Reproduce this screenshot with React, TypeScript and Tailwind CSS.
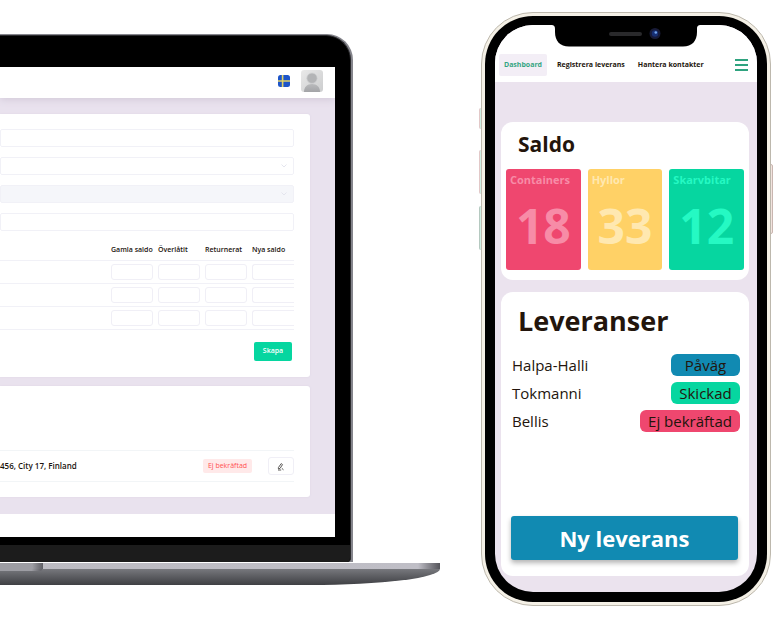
import React from "react";

const columns = ["Gamla saldo", "Överlåtit", "Returnerat", "Nya saldo"];
const products = ["Containers", "Hyllor", "Skarvbitar"];

const balances = [
  { label: "Containers", value: 18, style: "bg-[#ef476f] text-[#f78ca7]" },
  { label: "Hyllor", value: 33, style: "bg-[#ffd166] text-[#ffe8b0]" },
  { label: "Skarvbitar", value: 12, style: "bg-[#06d6a0] text-[#25f9c3]" },
];

const deliveries = [
  { name: "Halpa-Halli", status: "Påväg", style: "w-[69px] bg-[#118ab2]" },
  { name: "Tokmanni", status: "Skickad", style: "w-[69px] bg-[#06d6a0]" },
  { name: "Bellis", status: "Ej bekräftad", style: "w-[100px] bg-[#ef476f]" },
];

function SwedishFlag() {
  return (
    <svg viewBox="0 0 12 12" className="size-3" aria-hidden="true">
      <rect width="12" height="12" rx="2.5" fill="#1d55c9" />
      <path d="M4.6 0v12M0 6h12" stroke="#e3d267" strokeWidth="1.6" />
    </svg>
  );
}

function Avatar() {
  return (
    <svg viewBox="0 0 22 22" className="size-[22px]" aria-hidden="true">
      <defs>
        <linearGradient id="avatarBg" x1="0" y1="0" x2="1" y2="1">
          <stop offset="0" stopColor="#e9e9e9" />
          <stop offset="1" stopColor="#cccdce" />
        </linearGradient>
        <linearGradient id="avatarBody" x1="0" y1="0" x2="0" y2="1">
          <stop offset="0" stopColor="#b9babc" />
          <stop offset="1" stopColor="#a3a4a7" />
        </linearGradient>
      </defs>
      <rect width="22" height="22" rx="3" fill="url(#avatarBg)" />
      <path d="M3 22c0-5 3-8 8-8s8 3 8 8z" fill="url(#avatarBody)" />
      <circle cx="11" cy="8.2" r="5.2" fill="#b3b4b6" stroke="#d0d1d2" strokeWidth="0.7" />
    </svg>
  );
}

function Field({ label }: { label: string }) {
  return (
    <input
      type="text"
      aria-label={label}
      className="block h-[18px] w-full rounded-[2px] border border-[#f1f1f7] bg-white px-2 text-[8px] outline-none"
    />
  );
}

function SelectField({ label, style }: { label: string; style: string }) {
  return (
    <div className="relative">
      <select
        aria-label={label}
        className={"block h-[18px] w-full appearance-none rounded-[2px] border border-[#f1f1f7] px-2 text-[8px] outline-none " + style}
      >
        <option value=""></option>
      </select>
      <svg viewBox="0 0 6 4" className="pointer-events-none absolute top-[7px] right-[7px] h-1 w-[6px]" aria-hidden="true">
        <path d="M0.5 0.5 3 3 5.5 0.5" fill="none" stroke="#e4e5ee" />
      </svg>
    </div>
  );
}

function LaptopScreen() {
  return (
    <div className="overflow-hidden bg-[#e9e2ee]">
      <header className="flex h-[31px] items-center justify-end gap-[11px] bg-white pr-3 pb-1 shadow-[0_1px_8px_#cfc6d6]">
        <button type="button" aria-label="Svenska">
          <SwedishFlag />
        </button>
        <button type="button" aria-label="Konto">
          <Avatar />
        </button>
      </header>
      <main className="pt-4 pr-[25px] pb-[17px]">
        <section className="rounded-r-[3px] bg-white pt-[15px] pr-4 pb-4 shadow-[0_0_2px_#ddd5e4]">
          <form onSubmit={(event) => event.preventDefault()}>
            <div className="flex flex-col gap-[10px]">
              <Field label="Namn" />
              <SelectField label="Från" style="bg-white" />
              <SelectField label="Till" style="bg-[#f5f6fa]" />
              <Field label="Adress" />
            </div>
            <table className="mt-[9px] w-full table-fixed border-collapse">
              <thead>
                <tr className="h-5 border-b border-[#f1f1f7]">
                  <th aria-label="Produkt"></th>
                  {columns.map((column) => (
                    <th key={column} scope="col" className="w-[47px] p-0 text-left text-[7px] leading-5 font-semibold whitespace-nowrap text-[#1b130d] last:w-[42px]">
                      {column}
                    </th>
                  ))}
                </tr>
              </thead>
              <tbody>
                {products.map((product) => (
                  <tr key={product} className="h-[23px] border-b border-[#f1f1f7]">
                    <td></td>
                    {columns.map((column, index) => (
                      <td key={column} className="p-0">
                        <input
                          type="text"
                          aria-label={product + " " + column}
                          className={
                            index === columns.length - 1
                              ? "block h-4 w-[42px] rounded-l-[3px] border border-r-0 border-[#f0eff6] bg-white px-1 text-[7px] outline-none"
                              : "block h-4 w-[42px] rounded-[3px] border border-[#f0eff6] bg-white px-1 text-[7px] outline-none"
                          }
                        />
                      </td>
                    ))}
                  </tr>
                ))}
              </tbody>
            </table>
            <div className="mt-3 flex justify-end pr-[2px]">
              <button type="submit" className="h-[19px] w-[38px] rounded-[2px] bg-[#06d6a0] text-[7px] font-semibold text-white">
                Skapa
              </button>
            </div>
          </form>
        </section>
        <section className="mt-[9px] rounded-r-[3px] bg-white pt-16 pr-4 pb-[15px] shadow-[0_0_2px_#ddd5e4]">
          <div className="flex h-8 items-center justify-between border-y border-[#f2f5f7]">
            <p className="text-[8px] font-semibold whitespace-nowrap text-[#1b130d]">456, City 17, Finland</p>
            <div className="flex items-center gap-4">
              <span className="w-[49px] rounded-[2px] bg-[#ffe9e9] text-center text-[7px] leading-[14px] font-medium whitespace-nowrap text-[#ff5050]">
                Ej bekräftad
              </span>
              <button type="button" aria-label="Redigera" className="flex h-[18px] w-[26px] items-center justify-center rounded-[3px] border border-[#f0eff6]">
                <svg viewBox="0 0 8 9" className="h-[9px] w-2" aria-hidden="true">
                  <path d="M1.4 5.6 4.2 1.6 5.5 2.6 3 6.4 1.4 6.9zM1 8h3.2M4.8 6.3l1.7 1.5" fill="none" stroke="#4a4745" strokeWidth="0.9" />
                </svg>
              </button>
            </div>
          </div>
        </section>
      </main>
      <footer className="h-[23px] bg-white" />
    </div>
  );
}

function Laptop() {
  return (
    <div className="mt-[34px] min-w-0 flex-1">
      <div className="mr-[87px] overflow-hidden rounded-tr-[26px] bg-[#85858c] pt-px pr-[2px]">
        <div className="overflow-hidden rounded-tr-[25px] rounded-br-[4px] border-t border-r border-[#2b2b2e] bg-black pt-[31px]">
          <div className="pr-[15px] pb-2">
            <LaptopScreen />
          </div>
          <div className="h-[17px] bg-[#1c1c1c]" />
        </div>
      </div>
      <div className="mt-px flex h-[22px] flex-col overflow-hidden">
        <div className="h-[6px] shrink-0 bg-linear-to-r from-[#bcbbc2] via-[#bfbec6] via-95% to-[#55555b]">
          <div className="h-full w-[43px] bg-linear-to-r from-[#9d9da3] from-75% to-[#5f5f65]" />
        </div>
        <div className="h-4 bg-linear-to-b from-[#77787d] to-[#3f4044] [border-bottom-right-radius:130px_16px]">
          <div className="h-[2px] w-[42px] rounded-br-[6px] bg-linear-to-r from-[#9d9da3] from-75% to-[#5f5f65]" />
        </div>
      </div>
    </div>
  );
}

function Notch() {
  return (
    <div className="absolute inset-x-0 top-0 flex justify-center" aria-hidden="true">
      <svg viewBox="0 0 150 22" className="h-[22px] w-[150px]">
        <path d="M0 0h150c-3 0-4 1-4 4v3c0 9-5 14.500-14 14.500H18C9 21.500 4 16 4 7V4c0-3-1-4-4-4z" fill="#000" />
        <rect x="58" y="7" width="33" height="4" rx="2" fill="#29292b" />
        <circle cx="104" cy="8.500" r="5.500" fill="#181b38" />
        <circle cx="104" cy="8.500" r="3.200" fill="#172f73" />
        <circle cx="104.800" cy="7.500" r="1.300" fill="#73a5ed" />
      </svg>
    </div>
  );
}

function Phone() {
  return (
    <div className="relative mt-3 w-[290px] shrink-0">
      <div className="absolute top-24 -left-[2px] h-[21px] w-[3px] rounded-l-[2px] border-l border-[#e3c8c8] bg-[#cdeee2]" />
      <div className="absolute top-[138px] -left-[2px] h-11 w-[3px] rounded-l-[2px] border-l border-[#e3c8c8] bg-[#cdeee2]" />
      <div className="absolute top-[194px] -left-[2px] h-11 w-[3px] rounded-l-[2px] border-l border-[#b5c9c0] bg-[#cdeee2]" />
      <div className="absolute top-[152px] -right-[2px] h-[70px] w-[3px] rounded-r-[2px] border border-[#c9b6b0] bg-[#f2e4df]" />
      <div className="relative rounded-[52px] border border-[#bdb8ad] bg-[#f4f0e6] p-[3px]">
        <div className="rounded-[48px] bg-black px-[10px] pt-[9px] pb-[10px]">
          <div className="relative overflow-hidden rounded-[38px] bg-[#ebe3ee]">
            <Notch />
            <nav className="flex items-center bg-white pt-[29px] pr-[9px] pb-[6px] pl-1 text-[7px] leading-[22px] font-bold whitespace-nowrap text-[#23150c]">
              <a href="#dashboard" className="w-12 rounded-[2px] bg-[#f3eef6] text-center text-[#35a583]">Dashboard</a>
              <a href="#registrera" className="ml-[10px]">Registrera leverans</a>
              <a href="#kontakter" className="ml-[13px]">Hantera kontakter</a>
              <button type="button" aria-label="Meny" className="ml-auto flex w-[13px] flex-col gap-[3px]">
                <span className="h-[2px] bg-[#2fa37f]" />
                <span className="h-[2px] bg-[#2fa37f]" />
                <span className="h-[2px] bg-[#2fa37f]" />
              </button>
            </nav>
            <main className="flex flex-col gap-3 pt-10 pr-2 pb-4 pl-[6px] text-[#23150c]">
              <section className="rounded-xl bg-white px-[5px] pt-[7px] pb-[10px]">
                <h2 className="pl-3 text-[21px] leading-[30px] font-bold">Saldo</h2>
                <div className="mt-[10px] grid grid-cols-3 gap-[7px]">
                  {balances.map((item) => (
                    <div key={item.label} className={"h-[101px] rounded-[3px] pt-[3px] " + item.style}>
                      <p className="pl-1 text-[11px] leading-4 font-bold">{item.label}</p>
                      <p className="pt-[10px] text-center text-[48px] leading-[56px] font-bold">{item.value}</p>
                    </div>
                  ))}
                </div>
              </section>
              <section className="rounded-xl bg-white pt-[10px] pr-[9px] pb-4 pl-[10px]">
                <h2 className="pl-[7px] text-[27px] leading-[38px] font-bold">Leveranser</h2>
                <ul className="mt-[14px] flex flex-col gap-[6px] pl-px">
                  {deliveries.map((delivery) => (
                    <li key={delivery.name} className="flex items-center justify-between text-[15px] leading-[22px] font-medium">
                      <span>{delivery.name}</span>
                      <span className={"rounded-[6px] text-center whitespace-nowrap " + delivery.style}>{delivery.status}</span>
                    </li>
                  ))}
                </ul>
                <div className="mt-[84px] pr-[2px]">
                  <button type="button" className="block h-11 w-full rounded-[3px] bg-[#118ab2] text-[22px] font-bold text-white shadow-[0_3px_5px_#b5b5b5]">
                    Ny leverans
                  </button>
                </div>
              </section>
            </main>
          </div>
        </div>
      </div>
    </div>
  );
}

export default function App() {
  return (
    <div className="flex items-start gap-[41px] overflow-hidden bg-white pr-[2px] pb-4 font-['Open_Sans','Noto_Sans',sans-serif]">
      <Laptop />
      <Phone />
    </div>
  );
}
